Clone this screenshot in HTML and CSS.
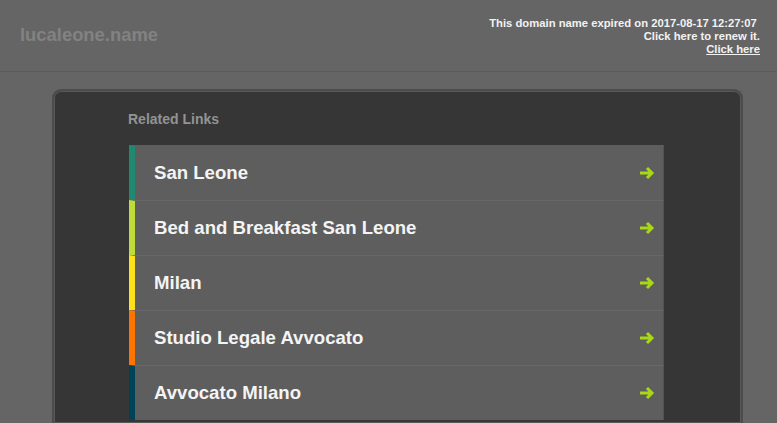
FILE: index.html
```html
<!DOCTYPE html>
<html>
<head>
<meta charset="utf-8">
<link rel="stylesheet" href="styles.css">
</head>
<body>
<div class="header">
  <div class="logo">lucaleone.name</div>
  <div class="notice">
    <div>This domain name expired on 2017-08-17 12:27:07&nbsp;</div>
    <div>Click here to renew it.</div>
    <div><a href="#">Click here</a></div>
  </div>
</div>
<div class="panel">
  <div class="title">Related Links</div>
  <ul class="links">
    <li class="c1"><span>San Leone</span><svg class="arrow" viewBox="0 0 16 14"><path d="M1 7H13M8 2L13 7L8 12" fill="none" stroke="#a8d816" stroke-width="3"/></svg></li>
    <li class="c2"><span>Bed and Breakfast San Leone</span><svg class="arrow" viewBox="0 0 16 14"><path d="M1 7H13M8 2L13 7L8 12" fill="none" stroke="#a8d816" stroke-width="3"/></svg></li>
    <li class="c3"><span>Milan</span><svg class="arrow" viewBox="0 0 16 14"><path d="M1 7H13M8 2L13 7L8 12" fill="none" stroke="#a8d816" stroke-width="3"/></svg></li>
    <li class="c4"><span>Studio Legale Avvocato</span><svg class="arrow" viewBox="0 0 16 14"><path d="M1 7H13M8 2L13 7L8 12" fill="none" stroke="#a8d816" stroke-width="3"/></svg></li>
    <li class="c5"><span>Avvocato Milano</span><svg class="arrow" viewBox="0 0 16 14"><path d="M1 7H13M8 2L13 7L8 12" fill="none" stroke="#a8d816" stroke-width="3"/></svg></li>
  </ul>
</div>
</body>
</html>
```
FILE: styles.css
```css
html, body {
  margin: 0;
  padding: 0;
  background: #656565;
  font-family: "Liberation Sans", Arial, sans-serif;
  overflow: hidden;
  height: 423px;
}
.header {
  height: 71px;
  border-bottom: 1px solid #5b5b5b;
  display: flex;
  justify-content: space-between;
  align-items: flex-start;
}
.logo {
  margin: 24px 0 0 20px;
  font-size: 18.4px;
  font-weight: bold;
  color: #828282;
}
.notice {
  margin: 17px 17px 0 0;
  text-align: right;
  color: #f2f2f2;
  font-size: 11.25px;
  font-weight: bold;
  line-height: 13px;
}
.notice a {
  color: #f2f2f2;
}
.panel {
  box-sizing: border-box;
  margin: 17px 0 0 52px;
  width: 691px;
  height: 334px;
  background: #363636;
  border: 2px solid #4c4c4c;
  border-bottom: 0;
  box-shadow: inset 0 0 0 1px #585858;
  border-radius: 9px 9px 0 0;
  padding: 0 0 0 74px;
}
.title {
  margin-top: 20px;
  font-size: 14px;
  font-weight: bold;
  color: #939393;
}
.links {
  list-style: none;
  margin: 18px 0 0 1px;
  padding: 0;
  width: 535px;
}
.links li {
  box-sizing: border-box;
  height: 55px;
  border-top: 1px solid #676767;
  border-left: 6px solid #1f8a70;
  border-right: 1px solid #535353;
  background: #5e5e5e;
  display: flex;
  align-items: center;
  justify-content: space-between;
  padding: 0 8px 0 19px;
  color: #f4f4f4;
  font-size: 18.6px;
  font-weight: bold;
}
.links li:first-child {
  border-top-color: #5e5e5e;
}
.links li.c2 { border-left-color: #bedb39; }
.links li.c3 { border-left-color: #ffe11a; }
.links li.c4 { border-left-color: #fd7400; }
.links li.c5 { border-left-color: #004358; }
.arrow {
  width: 16px;
  height: 14px;
}
```
